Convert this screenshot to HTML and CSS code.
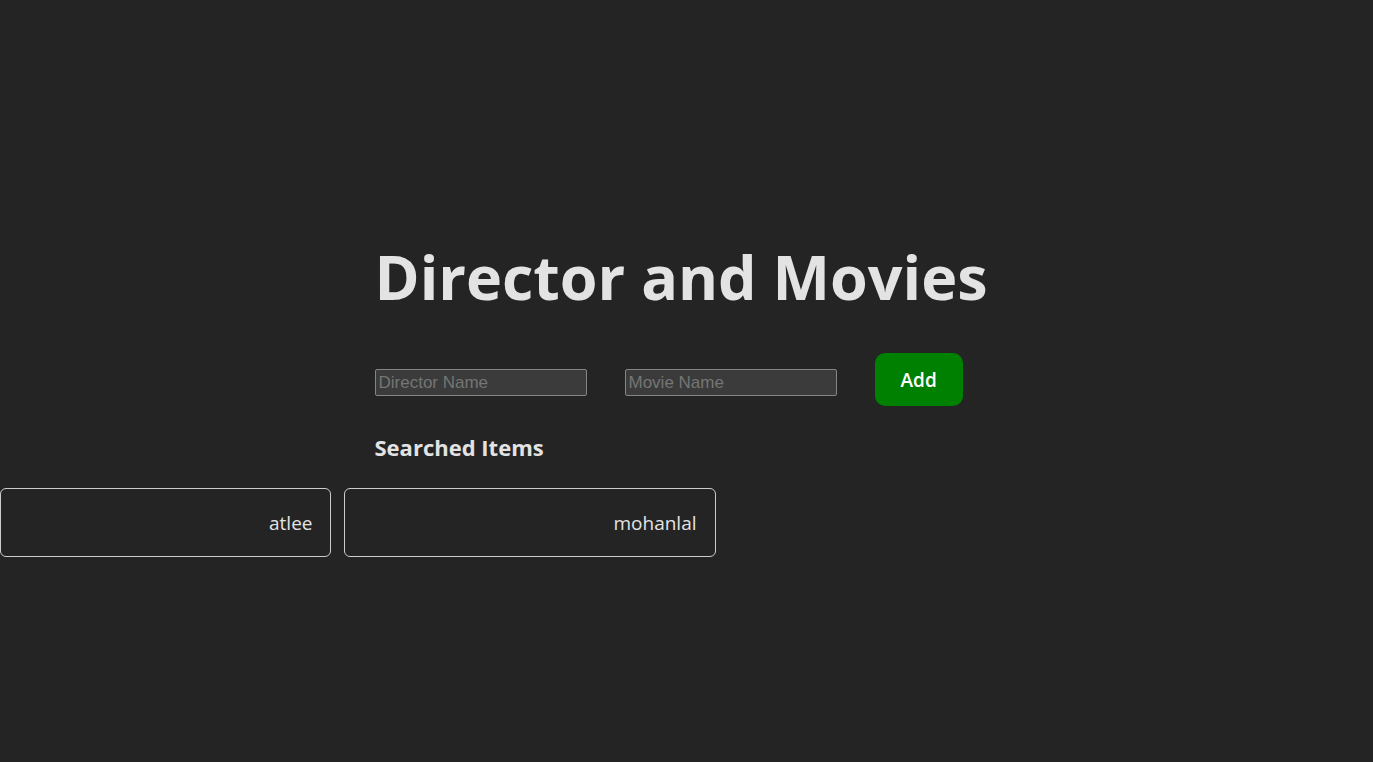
FILE: index.html
```html
<!DOCTYPE html>
<html lang="en">
<head>
<meta charset="utf-8">
<title>Director and Movies</title>
<link rel="stylesheet" href="styles.css">
</head>
<body>
<main class="app">
  <div class="intro">
    <h1 class="title">Director and Movies</h1>
    <form class="entry-form">
      <input class="field" type="text" placeholder="Director Name" aria-label="Director Name">
      <input class="field" type="text" placeholder="Movie Name" aria-label="Movie Name">
      <button class="add-button" type="button">Add</button>
    </form>
    <h2 class="subtitle">Searched Items</h2>
  </div>
  <ul class="results">
    <li class="card">atlee</li>
    <li class="card">mohanlal</li>
  </ul>
</main>
</body>
</html>
```

FILE: styles.css
```css
body {
  margin: 0;
  min-height: 100vh;
  display: flex;
  align-items: center;
  background: #242424;
  color: #e3e3e3;
  font-family: "Segoe UI", "Open Sans", "Noto Sans", sans-serif;
  font-size: 19px;
  line-height: 27px;
}

.app {
  width: 100%;
  padding-top: 35px;
}

.intro {
  width: max-content;
  min-width: 624px;
  margin: 0 auto;
}

.title {
  margin: 0 0 39px;
  font-size: 61px;
  line-height: 74px;
  font-weight: 700;
}

.entry-form {
  display: flex;
  align-items: center;
  gap: 38px;
}

.field {
  box-sizing: border-box;
  width: 212px;
  height: 27px;
  margin: 6px 0 0;
  padding: 1px 3px;
  border: 1px solid #858585;
  border-radius: 2px;
  background: #3b3b3b;
  color: #ffffff;
  font-family: "Liberation Sans", Arial, sans-serif;
  font-size: 17px;
}

.field::placeholder {
  color: #757575;
}

.add-button {
  padding: 14px 26px 12px;
  border: 0;
  border-radius: 10px;
  background: #008000;
  color: #ffffff;
  font: inherit;
  font-weight: 600;
}

.subtitle {
  margin: 27px 0;
  font-size: 22px;
  line-height: 28px;
  font-weight: 700;
}

.results {
  display: flex;
  gap: 13px;
  margin: 0;
  padding: 0;
  list-style: none;
}

.card {
  padding: 21px 18px 19px 268px;
  border: 1px solid #cccccc;
  border-radius: 6px;
}
```
